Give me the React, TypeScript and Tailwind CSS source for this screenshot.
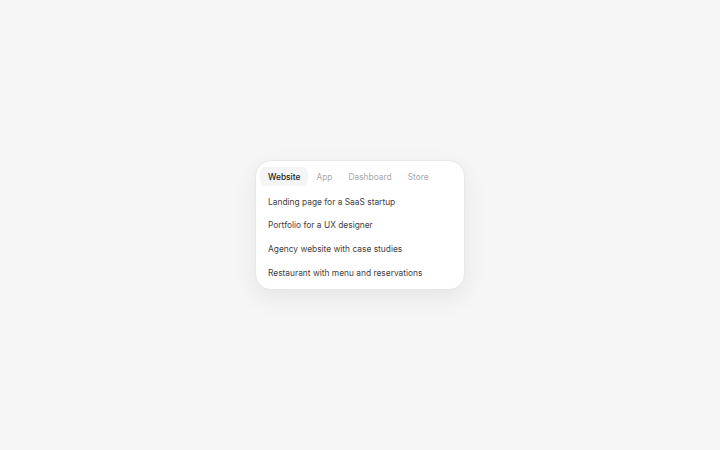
import { useState } from "react";

const tabs = ["Website", "App", "Dashboard", "Store"];

const ideas: Record<string, string[]> = {
  Website: [
    "Landing page for a SaaS startup",
    "Portfolio for a UX designer",
    "Agency website with case studies",
    "Restaurant with menu and reservations",
  ],
  App: [],
  Dashboard: [],
  Store: [],
};

export default function App() {
  const [active, setActive] = useState("Website");

  return (
    <div
      className="flex h-[450px] w-full items-center justify-center bg-[#f6f6f6]"
      style={{ fontFamily: "Inter, 'Noto Sans', sans-serif" }}
    >
      <div className="w-[210px] rounded-[16px] border border-[#e8e8e8] bg-white px-[4px] pb-[4px] pt-[6px] shadow-[0_8px_24px_rgba(0,0,0,0.07)]">
        <div className="flex items-center">
          {tabs.map((tab) => (
            <button
              key={tab}
              onClick={() => setActive(tab)}
              className={`h-[19px] rounded-[6px] px-[8px] text-[8.4px] leading-none ${
                active === tab
                  ? "bg-[#f5f5f5] font-medium text-[#1a1a1a]"
                  : "text-[#a8a8a8]"
              }`}
            >
              {tab}
            </button>
          ))}
        </div>
        <div className="mt-[4px] flex flex-col">
          {ideas[active].map((idea) => (
            <div
              key={idea}
              className="flex h-[23.6px] items-center px-[8px] text-[8.4px] text-[#424242]"
            >
              {idea}
            </div>
          ))}
        </div>
      </div>
    </div>
  );
}
